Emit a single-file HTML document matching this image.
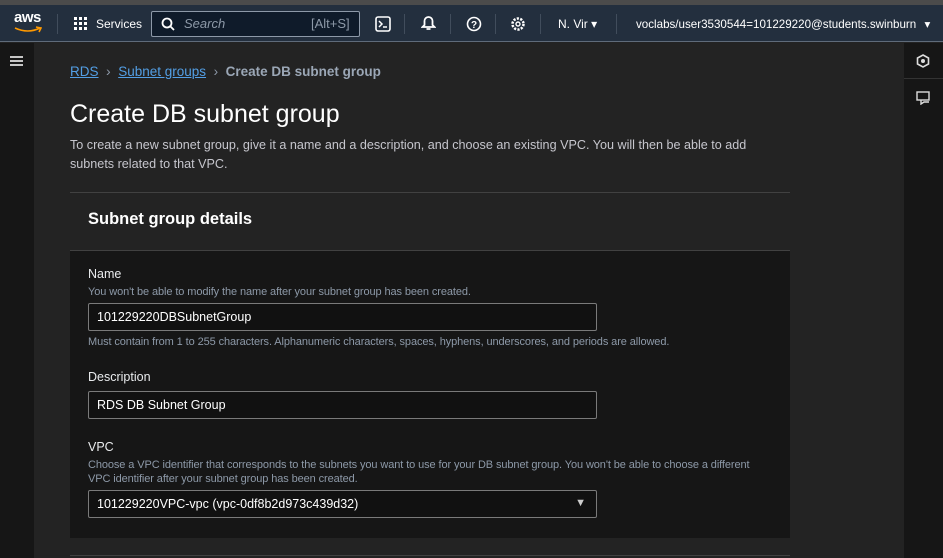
<!DOCTYPE html><html><head><style>
*{box-sizing:border-box;margin:0;padding:0}
body{width:943px;height:558px;overflow:hidden;background:#232323;font-family:"Liberation Sans",sans-serif;color:#d1d5db;position:relative}
.top{position:absolute;left:0;top:0;width:943px;height:5px;background:#4b4b4b}
.nav{position:absolute;left:0;top:5px;width:943px;height:37px;background:#232f3e;border-bottom:1px solid #5f6b7a;color:#fff;font-size:12px}
.nav *{position:absolute}
.sep{top:9px;width:1px;height:20px;background:#414d5c}
.lside{position:absolute;left:0;top:43px;width:34px;height:515px;background:#161616}
.rside{position:absolute;left:904px;top:43px;width:39px;height:515px;background:#161616}
a{color:#539fe5;text-decoration:underline}
.card{position:absolute;left:70px;top:192px;width:720px;height:346px;border-top:1px solid #414141}
.ch{height:58px;background:#232323;border-bottom:1px solid #414141;padding:17px 18px;font-size:16.5px;font-weight:bold;color:#fff}
.cb{background:#161616;height:287px;position:relative}
.lbl{position:absolute;left:18px;font-size:12.5px;color:#e9ebed}
.hint{position:absolute;left:18px;font-size:11px;color:#8d99a8;letter-spacing:-0.1px}
.inp{position:absolute;left:18px;width:509px;height:28px;border:1px solid #7a7a7a;border-radius:2px;background:#111;color:#fff;font-size:12.5px;padding:6px 8px}
</style></head><body>
<div class="top"></div>
<div class="nav">
<div style="left:14px;top:4px;font-size:15px;font-weight:bold;letter-spacing:-0.5px">aws</div>
<svg style="left:14px;top:21px" width="28" height="8"><path d="M1 2 Q14 8 26 2 M22 1 L27 2 L25 6" stroke="#ff9900" stroke-width="1.6" fill="none"/></svg>
<div class="sep" style="left:57px"></div>
<svg style="left:74px;top:12px" width="14" height="14"><g fill="#fff"><rect x="0" y="0" width="3" height="3"/><rect x="5" y="0" width="3" height="3"/><rect x="10" y="0" width="3" height="3"/><rect x="0" y="5" width="3" height="3"/><rect x="5" y="5" width="3" height="3"/><rect x="10" y="5" width="3" height="3"/><rect x="0" y="10" width="3" height="3"/><rect x="5" y="10" width="3" height="3"/><rect x="10" y="10" width="3" height="3"/></g></svg>
<div style="left:96px;top:12px">Services</div>
<div style="left:151px;top:6px;width:209px;height:26px;background:#0f1b2a;border:1px solid #8d99a8;border-radius:2px"></div>
<svg style="left:161px;top:12px" width="14" height="14"><circle cx="6" cy="6" r="4.5" stroke="#fff" stroke-width="1.8" fill="none"/><path d="M9.5 9.5L13 13" stroke="#fff" stroke-width="1.8"/></svg>
<div style="left:184px;top:11px;font-style:italic;color:#8d99a8;font-size:13px">Search</div>
<div style="left:311px;top:11px;color:#8d99a8;font-size:13px">[Alt+S]</div>
<svg style="left:375px;top:11px" width="16" height="16"><rect x="1" y="1" width="14" height="14" rx="2" stroke="#fff" stroke-width="1.6" fill="none"/><path d="M4 5l3 3-3 3M8 11h4" stroke="#fff" stroke-width="1.5" fill="none"/></svg>
<div class="sep" style="left:404px"></div>
<svg style="left:421px;top:10px" width="15" height="17"><path d="M7.5 2a4 4 0 0 0-4 4v4l-2 2h12l-2-2V6a4 4 0 0 0-4-4zM5.5 14h4" stroke="#fff" stroke-width="1.8" fill="none"/></svg>
<div class="sep" style="left:450px"></div>
<svg style="left:466px;top:11px" width="16" height="16"><circle cx="8" cy="8" r="6.5" stroke="#fff" stroke-width="1.6" fill="none"/><text x="8" y="12" font-size="10" font-weight="bold" fill="#fff" text-anchor="middle" font-family="Liberation Sans">?</text></svg>
<div class="sep" style="left:495px"></div>
<svg style="left:510px;top:11px" width="16" height="16"><circle cx="8" cy="8" r="5.5" stroke="#fff" stroke-width="2.5" stroke-dasharray="2.2 1.3" fill="none"/><circle cx="8" cy="8" r="2" stroke="#fff" stroke-width="1.4" fill="none"/></svg>
<div class="sep" style="left:540px"></div>
<div style="left:558px;top:12px">N. Vir ▾</div>
<div class="sep" style="left:616px"></div>
<div style="left:636px;top:12px;font-size:11.6px">voclabs/user3530544=101229220@students.swinburn <span style="position:static;margin-left:5px">▾</span></div>
</div>
<div class="lside"><div style="position:absolute;left:10px;top:13px;width:13px;height:10px;border-top:2px solid #c6c6c6;border-bottom:2px solid #c6c6c6"><div style="margin-top:2px;height:2px;background:#c6c6c6"></div></div></div>
<div class="rside">
<svg style="position:absolute;left:12px;top:11px" width="14" height="14"><path d="M7 1l5.5 3v6L7 13 1.5 10V4z" stroke="#ddd" stroke-width="1.6" fill="none"/><circle cx="7" cy="7" r="2" fill="#ddd"/></svg>
<div style="position:absolute;left:0;top:35px;width:39px;height:1px;background:#333"></div>
<svg style="position:absolute;left:12px;top:48px" width="14" height="14"><rect x="1" y="1" width="12" height="8" stroke="#ddd" stroke-width="1.4" fill="none"/><path d="M5 9v4l3-2h5" stroke="#ddd" stroke-width="1.4" fill="none"/></svg>
</div>
<div style="position:absolute;left:70px;top:63px;font-size:13.5px;color:#8d99a8"><a>RDS</a> &nbsp;<span style="font-size:14px">›</span>&nbsp; <a>Subnet groups</a> &nbsp;<span>›</span>&nbsp; <b style="color:#9ba7b6">Create DB subnet group</b></div>
<div style="position:absolute;left:70px;top:100px;font-size:25px;color:#fff">Create DB subnet group</div>
<div style="position:absolute;left:70px;top:136px;width:720px;font-size:12.6px;line-height:19px;color:#c6c6cd">To create a new subnet group, give it a name and a description, and choose an existing VPC. You will then be able to add subnets related to that VPC.</div>
<div class="card">
<div class="ch">Subnet group details</div>
<div class="cb">
<div class="lbl" style="top:16px">Name</div>
<div class="hint" style="top:35px">You won't be able to modify the name after your subnet group has been created.</div>
<div class="inp" style="top:52px">101229220DBSubnetGroup</div>
<div class="hint" style="top:85px">Must contain from 1 to 255 characters. Alphanumeric characters, spaces, hyphens, underscores, and periods are allowed.</div>
<div class="lbl" style="top:119px">Description</div>
<div class="inp" style="top:140px">RDS DB Subnet Group</div>
<div class="lbl" style="top:189px">VPC</div>
<div class="hint" style="top:208px;width:680px;line-height:13.5px">Choose a VPC identifier that corresponds to the subnets you want to use for your DB subnet group. You won't be able to choose a different VPC identifier after your subnet group has been created.</div>
<div class="inp" style="top:239px">101229220VPC-vpc (vpc-0df8b2d973c439d32)<span style="position:absolute;right:10px;top:6px;font-size:11px;color:#ccc">▼</span></div>
</div>
</div>
<div style="position:absolute;left:70px;top:555px;width:720px;height:1px;background:#414141"></div>
</body></html>
